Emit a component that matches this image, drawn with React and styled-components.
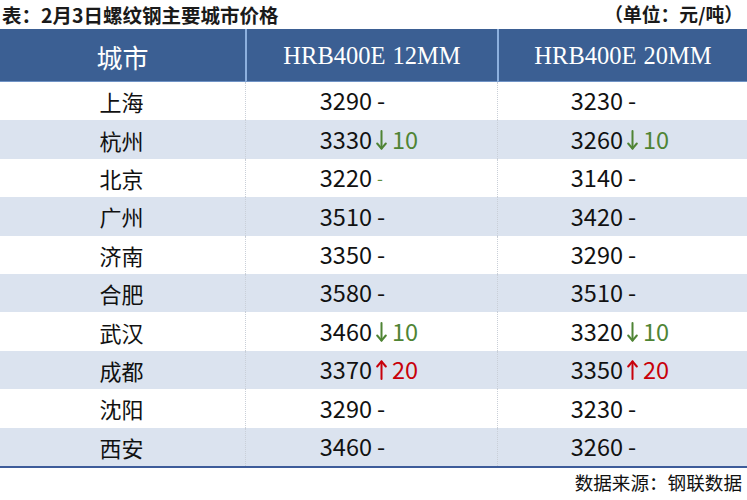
import React from "react";
import styled, { createGlobalStyle } from "styled-components";

const Global = createGlobalStyle`
  html, body { margin: 0; padding: 0; background: #ffffff; }
  body { width: 747px; height: 500px; overflow: hidden; font-family: "Noto Sans CJK SC", "Noto Sans", sans-serif; }
`;

const Page = styled.div`
  width: 747px;
  height: 500px;
  display: flex;
  flex-direction: column;
`;

const TitleBar = styled.div`
  height: 29px;
  display: flex;
  align-items: center;
  justify-content: space-between;
  padding: 0 4px 0 2px;
  font-size: 19.5px;
  font-weight: 700;
  color: #1a1a1a;
  line-height: 1;
`;

const Unit = styled.span`
  font-size: 18.8px;
`;

const Grid = styled.div`
  display: grid;
  grid-template-columns: 245px 252px 250px;
`;

const HeadCell = styled.div`
  height: 53px;
  background: #3b5f93;
  color: #fff;
  display: flex;
  align-items: center;
  justify-content: center;
  font-family: "Liberation Serif", "Noto Sans CJK SC", serif;
  font-size: ${(p) => (p.$cjk ? "26px" : "24.5px")};
  word-spacing: 1px;
  font-weight: 400;
  border-left: ${(p) => (p.$first ? "none" : "2px solid #8db0de")};
  border-bottom: 1px solid #6f93c5;
  box-sizing: border-box;
  padding-top: 2px;
`;

const Row = styled.div`
  display: contents;
`;

const Cell = styled.div`
  height: 38.4px;
  background: ${(p) => (p.$alt ? "#dbe3ef" : "#ffffff")};
  border-left: ${(p) => (p.$first ? "none" : "1px dotted #c9cfd8")};
  box-sizing: border-box;
  display: flex;
  align-items: center;
  font-size: 23.5px;
  color: #111;
  line-height: 1;
`;

const CityCell = styled(Cell)`
  justify-content: center;
  padding-right: 2px;
  font-size: 22px;
`;

const Num = styled.span`
  width: ${(p) => p.$w}px;
  flex: none;
  align-self: stretch;
  display: flex;
  align-items: center;
  justify-content: flex-end;
`;

const Change = styled.span`
  padding-left: ${(p) => (p.$dir === "up" || p.$dir === "down" ? "4px" : "5px")};
  color: ${(p) => (p.$dir === "down" ? "#4f8434" : p.$dir === "up" ? "#c8000a" : p.$dir === "flatg" ? "#5f8f3c" : "#111")};
  font-size: ${(p) => (p.$dir === "flatg" ? "17px" : "23.5px")};
  align-self: stretch;
  display: flex;
  align-items: center;
  min-width: 12px;
  flex: none;
  white-space: nowrap;
`;

const ArrowSvg = styled.svg`
  flex: none;
  margin-right: 5px;
  margin-top: 1px;
`;

function Arrow({ up }) {
  return (
    <ArrowSvg width="11" height="20" viewBox="0 0 11 20" fill="none" stroke="currentColor" strokeWidth="2" strokeLinecap="round" strokeLinejoin="round">
      {up ? (
        <>
          <path d="M5.5 19V1.5" />
          <path d="M1.2 6.5L5.5 1.3L9.8 6.5" />
        </>
      ) : (
        <>
          <path d="M5.5 1V18.5" />
          <path d="M1.2 13.5L5.5 18.7L9.8 13.5" />
        </>
      )}
    </ArrowSvg>
  );
}

const BottomRule = styled.div`
  height: 2px;
  background: #3d5c9a;
`;

const Footer = styled.div`
  display: flex;
  justify-content: flex-end;
  padding: 5px 5px 0 0;
  font-size: 18.6px;
  color: #111;
  line-height: 1;
`;

const rows = [
  ["上海", "3290", null, "3230", null],
  ["杭州", "3330", ["down", "10"], "3260", ["down", "10"]],
  ["北京", "3220", ["flatg", "-"], "3140", null],
  ["广州", "3510", null, "3420", null],
  ["济南", "3350", null, "3290", null],
  ["合肥", "3580", null, "3510", null],
  ["武汉", "3460", ["down", "10"], "3320", ["down", "10"]],
  ["成都", "3370", ["up", "20"], "3350", ["up", "20"]],
  ["沈阳", "3290", null, "3230", null],
  ["西安", "3460", null, "3260", null],
];

function ChangeText({ c }) {
  if (!c) return <Change>-</Change>;
  const [dir, v] = c;
  if (dir === "flatg") return <Change $dir="flatg">-</Change>;
  return (
    <Change $dir={dir}>
      <Arrow up={dir === "up"} />
      {v}
    </Change>
  );
}

export default function App() {
  return (
    <Page>
      <Global />
      <TitleBar>
        <span>表：2月3日螺纹钢主要城市价格</span>
        <Unit>（单位：元/吨）</Unit>
      </TitleBar>
      <Grid>
        <HeadCell $first $cjk>城市</HeadCell>
        <HeadCell>HRB400E 12MM</HeadCell>
        <HeadCell>HRB400E 20MM</HeadCell>
        {rows.map((r, i) => {
          const alt = i % 2 === 1;
          return (
            <Row key={r[0]}>
              <CityCell $first $alt={alt}>{r[0]}</CityCell>
              <Cell $alt={alt}>
                <Num $w={126}>{r[1]}</Num>
                <ChangeText c={r[2]} />
              </Cell>
              <Cell $alt={alt}>
                <Num $w={125}>{r[3]}</Num>
                <ChangeText c={r[4]} />
              </Cell>
            </Row>
          );
        })}
      </Grid>
      <BottomRule />
      <Footer>数据来源：钢联数据</Footer>
    </Page>
  );
}
